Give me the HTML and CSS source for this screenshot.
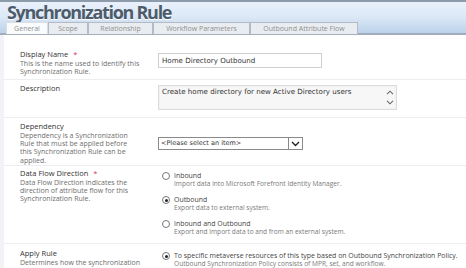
FILE: index.html
```html
<!DOCTYPE html>
<html lang="en">
<head>
  <meta charset="UTF-8" />
  <title>Synchronization Rule</title>
  <link rel="stylesheet" href="styles.css">
</head>
<body>
  <div class="header">
    <h1>Synchronization Rule</h1>
    <div class="tabs">
      <div class="tab active">General</div>
      <div class="tab">Scope</div>
      <div class="tab">Relationship</div>
      <div class="tab">Workflow Parameters</div>
      <div class="tab">Outbound Attribute Flow</div>
    </div>
  </div>

  <div class="form">
    <div class="row row-first">
      <div class="label-col">
        <div class="label">Display Name <span class="req">*</span></div>
        <div class="desc">This is the name used to identify this<br>Synchronization Rule.</div>
      </div>
      <div class="field-col">
        <div class="text-input">Home Directory Outbound</div>
      </div>
    </div>

    <div class="row row-desc">
      <div class="label-col">
        <div class="label">Description</div>
      </div>
      <div class="field-col">
        <div class="textarea">
          <span>Create home directory for new Active Directory users</span>
          <div class="scroll">
            <svg width="8" height="5" viewBox="0 0 8 5"><path d="M1 4.2 L4 1.2 L7 4.2" fill="none" stroke="#666" stroke-width="1.1"/></svg>
            <svg width="8" height="5" viewBox="0 0 8 5"><path d="M1 0.8 L4 3.8 L7 0.8" fill="none" stroke="#666" stroke-width="1.1"/></svg>
          </div>
        </div>
      </div>
    </div>

    <div class="row row-dep">
      <div class="label-col">
        <div class="label">Dependency</div>
        <div class="desc">Dependency is a Synchronization<br>Rule that must be applied before<br>this Synchronization Rule can be<br>applied.</div>
      </div>
      <div class="field-col">
        <div class="select">
          <span>&lt;Please select an item&gt;</span>
          <div class="select-btn">
            <svg width="9" height="6" viewBox="0 0 9 6"><path d="M1 1 L4.5 4.5 L8 1" fill="none" stroke="#222" stroke-width="1.4"/></svg>
          </div>
        </div>
      </div>
    </div>

    <div class="row row-flow">
      <div class="label-col">
        <div class="label">Data Flow Direction <span class="req">*</span></div>
        <div class="desc">Data Flow Direction indicates the<br>direction of attribute flow for this<br>Synchronization Rule.</div>
      </div>
      <div class="field-col radios">
        <div class="radio">
          <span class="dot"></span>
          <div>
            <div class="radio-label">Inbound</div>
            <div class="radio-desc">Import data into Microsoft Forefront Identity Manager.</div>
          </div>
        </div>
        <div class="radio">
          <span class="dot checked"></span>
          <div>
            <div class="radio-label">Outbound</div>
            <div class="radio-desc">Export data to external system.</div>
          </div>
        </div>
        <div class="radio">
          <span class="dot"></span>
          <div>
            <div class="radio-label">Inbound and Outbound</div>
            <div class="radio-desc">Export and import data to and from an external system.</div>
          </div>
        </div>
      </div>
    </div>

    <div class="row row-apply">
      <div class="label-col">
        <div class="label">Apply Rule</div>
        <div class="desc">Determines how the synchronization</div>
      </div>
      <div class="field-col radios">
        <div class="radio">
          <span class="dot checked"></span>
          <div>
            <div class="radio-label">To specific metaverse resources of this type based on Outbound Synchronization Policy.</div>
            <div class="radio-desc">Outbound Synchronization Policy consists of MPR, set, and workflow.</div>
          </div>
        </div>
      </div>
    </div>
  </div>
</body>
</html>
```

FILE: styles.css
```css
* {
  box-sizing: border-box;
}

body {
  margin: 0;
  font-family: 'Open Sans', sans-serif;
  background: #fff;
  color: #333;
  overflow: hidden;
}

/* title bar with tabs */
.header {
  height: 35px;
  border-top: 2px solid #8e9bab;
  border-bottom: 2px solid #a3aebb;
  background: linear-gradient(#e9f1fc, #dde9f7 45%, #bcd2ea);
  display: flex;
  flex-direction: column;
  justify-content: space-between;
}

h1 {
  margin: 0;
  padding: 0 0 0 7px;
  font-size: 18px;
  line-height: 20px;
  font-weight: 700;
  letter-spacing: -1.3px;
  color: #4d5c6c;
  text-shadow: 0 1px 0 #fff;
}

.tabs {
  display: flex;
  padding-left: 6px;
  height: 12px;
}

.tab {
  font-size: 7px;
  line-height: 11px;
  color: #8f8f8f;
  background: #e9edf1;
  border: 1px solid #b3bcc6;
  border-bottom: none;
  text-align: center;
}

.tab:nth-child(1) { width: 42px; }
.tab:nth-child(2) { width: 40px; }
.tab:nth-child(3) { width: 65px; }
.tab:nth-child(4) { width: 97px; }
.tab:nth-child(5) { width: 108px; }

.tab.active {
  background: #fafbfc;
  border-color: #d8dde2;
}

/* form rows */
.form {
  border-left: 4px solid #f1f3f6;
}

.row {
  display: grid;
  grid-template-columns: 154px 1fr;
  border-bottom: 1px solid #eceef0;
}

.label-col {
  padding-left: 16px;
}

.label {
  font-size: 7.5px;
  line-height: 9px;
  color: #333;
}

.req {
  color: #e0306a;
  margin-left: 3px;
}

.desc {
  font-size: 7px;
  line-height: 8.2px;
  color: #6e6e6e;
  margin-top: 1px;
  white-space: nowrap;
}

.row-first {
  height: 45px;
  padding-top: 15px;
}

.row-desc {
  height: 38px;
  padding-top: 4px;
}

.row-dep {
  height: 48px;
  padding-top: 4px;
}

.row-flow {
  height: 78px;
  padding-top: 3px;
}

.row-apply {
  padding-top: 5px;
  border-bottom: none;
}

.text-input {
  width: 164px;
  height: 15px;
  border: 1px solid #cfcfcf;
  font-family: 'DejaVu Sans', sans-serif;
  font-size: 7.1px;
  line-height: 13px;
  padding-left: 3px;
  color: #333;
  margin-top: 3px;
}

.textarea {
  width: 239px;
  height: 25px;
  margin-top: 1px;
  border: 1px solid #dcdcdc;
  box-shadow: inset 0 0 2px #e6e6e6;
  background: #f7f7f7;
  display: flex;
  justify-content: space-between;
  font-family: 'DejaVu Sans', sans-serif;
  font-size: 7.1px;
  line-height: 10px;
  color: #333;
  padding: 1px 2px 0 3px;
}

.scroll {
  display: flex;
  flex-direction: column;
  gap: 5px;
  padding-top: 3px;
}

.scroll svg {
  display: block;
}

.select {
  width: 145px;
  height: 13px;
  margin-top: 15px;
  border: 1px solid #8a8a8a;
  display: flex;
  justify-content: space-between;
  font-family: 'DejaVu Sans', sans-serif;
  font-size: 6.5px;
  line-height: 11px;
  color: #333;
  padding-left: 2px;
}

.select-btn {
  width: 14px;
  border-left: 1px solid #8a8a8a;
  display: flex;
  align-items: center;
  justify-content: center;
}

.radios {
  display: flex;
  flex-direction: column;
  gap: 7px;
  padding-left: 4px;
  padding-top: 2px;
}

.radio {
  display: flex;
  gap: 4px;
}

.dot {
  flex: none;
  width: 8px;
  height: 8px;
  margin-top: 1px;
  border: 1px solid #777;
  border-radius: 50%;
  background: #fff;
  position: relative;
}

.dot.checked::after {
  content: "";
  position: absolute;
  top: 1.5px;
  left: 1.5px;
  width: 3px;
  height: 3px;
  border-radius: 50%;
  background: #222;
}

.radio-label {
  font-size: 6.95px;
  line-height: 9px;
  color: #444;
}

.radio-desc {
  font-size: 6.6px;
  line-height: 8px;
  color: #7a7a7a;
}
```
